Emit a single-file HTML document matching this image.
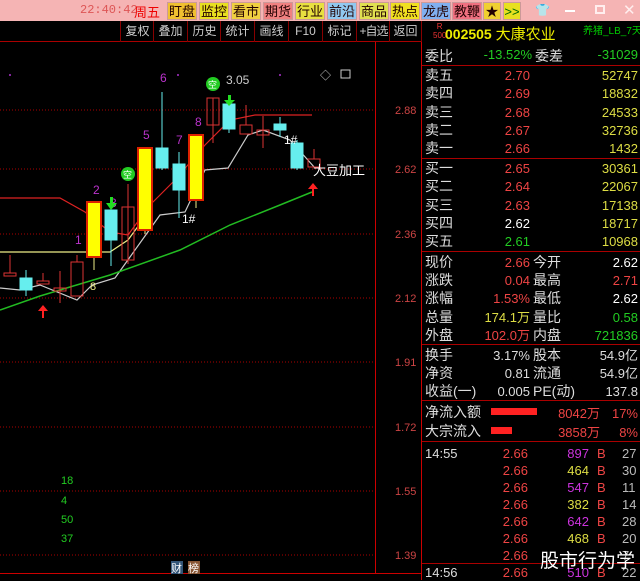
<!DOCTYPE html>
<html><head><meta charset="utf-8"><style>
*{margin:0;padding:0;box-sizing:border-box}
body{width:640px;height:580px;background:#000;overflow:hidden;position:relative;font-family:"Liberation Sans","Noto Sans CJK SC",sans-serif}
.a{position:absolute;white-space:nowrap}
#top{position:absolute;left:0;top:0;width:640px;height:21px;background:#f5b4b4}
.btn{position:absolute;top:2px;height:18px;font-size:13px;line-height:18px;text-align:center;color:#200;border:1px solid #c99}
#tb{position:absolute;left:0;top:21px;width:422px;height:21px;border-bottom:1px solid #a00}
.tb{position:absolute;top:21px;height:21px;font-size:12px;line-height:21px;color:#ccc;text-align:center;border-left:1px solid #800;white-space:nowrap;overflow:hidden}
.r{font-size:14px;color:#ddd}
.n{font-size:13px;text-align:right}
.hl{position:absolute;left:422px;width:218px;height:1px;background:#a00}
</style></head><body>
<div id="top"></div>
<div class="a" style="left:80px;top:3px;font-size:12px;color:#d55;font-family:'Liberation Mono',monospace">22:40:42</div>
<div class="a" style="left:134px;top:2px;font-size:13px;color:#e00">周五</div>
<div class="btn" style="left:167px;width:30px;background:#f0c030">盯盘</div>
<div class="btn" style="left:199px;width:30px;background:#e8e020">监控</div>
<div class="btn" style="left:231px;width:30px;background:#f0d040">看市</div>
<div class="btn" style="left:263px;width:30px;background:#f08080">期货</div>
<div class="btn" style="left:295px;width:30px;background:#e8e040">行业</div>
<div class="btn" style="left:327px;width:30px;background:#90c8f0">前沿</div>
<div class="btn" style="left:359px;width:30px;background:#e0e050">商品</div>
<div class="btn" style="left:390px;width:30px;background:#f0e020">热点</div>
<div class="btn" style="left:421px;width:30px;background:#80b0f0">龙虎</div>
<div class="btn" style="left:452px;width:30px;background:#f07080">教鞭</div>
<div class="btn" style="left:483px;width:18px;background:#f0d030">★</div>
<div class="btn" style="left:503px;width:18px;background:#e8e020;color:#060">&gt;&gt;</div>
<div class="a" style="left:535px;top:3px;font-size:12px;color:#fff">👕</div>
<div class="a" style="left:565px;top:10px;width:10px;height:2px;background:#fff"></div>
<div class="a" style="left:595px;top:5px;width:10px;height:9px;border:2px solid #fee"></div>
<div class="a" style="left:623px;top:1px;font-size:15px;color:#fee">✕</div>
<div id="tb"></div>
<div class="tb" style="left:120px;width:34px">复权</div>
<div class="tb" style="left:153px;width:34px">叠加</div>
<div class="tb" style="left:187px;width:34px">历史</div>
<div class="tb" style="left:220px;width:34px">统计</div>
<div class="tb" style="left:254px;width:34px">画线</div>
<div class="tb" style="left:288px;width:34px">F10</div>
<div class="tb" style="left:322px;width:34px">标记</div>
<div class="tb" style="left:356px;width:34px;letter-spacing:-1px">+自选</div>
<div class="tb" style="left:389px;width:33px;border-right:1px solid #800">返回</div>
<div class="a" style="left:433px;top:22px;font-size:8px;line-height:9px;color:#e33;text-align:center">R<br>500</div>
<div class="a" style="left:445px;top:23px;font-size:14px;color:#ee0;font-weight:bold">002505 <span style="font-weight:normal;font-size:15px">大康农业</span></div>
<div class="a" style="left:583px;top:22px;font-size:10px;color:#0c0">养猪_LB_7天</div>

<svg class="a" style="left:0;top:42px" width="422" height="538">
<g stroke="#a00" stroke-dasharray="1,2" stroke-width="1">
<line x1="0" y1="68" x2="375" y2="68"/><line x1="0" y1="127" x2="375" y2="127"/><line x1="0" y1="192" x2="375" y2="192"/><line x1="0" y1="256" x2="375" y2="256"/><line x1="0" y1="320" x2="375" y2="320"/><line x1="0" y1="385" x2="375" y2="385"/><line x1="0" y1="449" x2="375" y2="449"/><line x1="0" y1="513" x2="375" y2="513"/>
</g>
<line x1="375.5" y1="0" x2="375.5" y2="531" stroke="#c00"/>
<line x1="0" y1="531.5" x2="422" y2="531.5" stroke="#c00"/>
<line x1="421.5" y1="0" x2="421.5" y2="538" stroke="#c00"/>
<g fill="#c44" font-size="11">
<text x="395" y="72">2.88</text><text x="395" y="131">2.62</text><text x="395" y="196">2.36</text><text x="395" y="260">2.12</text><text x="395" y="324">1.91</text><text x="395" y="389">1.72</text><text x="395" y="453">1.55</text><text x="395" y="517">1.39</text>
</g>
<g transform="translate(0,-42)">
<polyline fill="none" stroke="#d22" stroke-width="1.2" points="0,198 60,198 85,212 110,232 128,235 150,205 175,180 205,145 230,120 255,115 312,115"/>
<polyline fill="none" stroke="#ee8" stroke-width="1.2" points="0,252 110,252 128,240 150,210"/>
<polyline fill="none" stroke="#ccc" stroke-width="1.2" points="0,288 20,290 40,285 77,300 92,285 115,278 160,215 185,212 205,170 228,168 248,135 263,130 290,140 315,168"/>
<polyline fill="none" stroke="#2b2" stroke-width="1.5" points="0,310 40,296 110,275 180,250 230,225 280,205 312,192"/>
<g stroke="#d33" fill="none">
<line x1="10" y1="255" x2="10" y2="273"/><rect x="4" y="273" width="12" height="3"/>
<line x1="43" y1="273" x2="43" y2="281"/><rect x="37" y="281" width="12" height="3"/>
<line x1="60" y1="271" x2="60" y2="303"/><rect x="54" y="288" width="12" height="3"/>
<line x1="77" y1="255" x2="77" y2="262"/><rect x="71" y="262" width="12" height="34"/>
<line x1="128" y1="184" x2="128" y2="264"/><rect x="122" y="207" width="12" height="53"/>
<line x1="213" y1="98" x2="213" y2="143"/><rect x="207" y="98" width="12" height="27"/>
<line x1="246" y1="105" x2="246" y2="125"/><rect x="240" y="125" width="12" height="9"/>
<line x1="263" y1="116" x2="263" y2="148"/><rect x="257" y="130" width="12" height="5"/>
<line x1="314" y1="149" x2="314" y2="159"/><rect x="308" y="159" width="12" height="8"/>
</g>
<g stroke="#6ee" fill="#6ee">
<line x1="26" y1="270" x2="26" y2="296"/><rect x="20" y="278" width="12" height="12"/>
<line x1="111" y1="200" x2="111" y2="266"/><rect x="105" y="210" width="12" height="30"/>
<line x1="162" y1="92" x2="162" y2="170"/><rect x="156" y="148" width="12" height="20"/>
<line x1="179" y1="152" x2="179" y2="218"/><rect x="173" y="164" width="12" height="26"/>
<line x1="229" y1="104" x2="229" y2="133"/><rect x="223" y="104" width="12" height="25"/>
<line x1="280" y1="117" x2="280" y2="137"/><rect x="274" y="124" width="12" height="6"/>
<line x1="297" y1="140" x2="297" y2="170"/><rect x="291" y="143" width="12" height="25"/>
</g>
<g fill="#ff0" stroke="#d20" stroke-width="2">
<line x1="94" y1="257" x2="94" y2="270" stroke="#ee8" stroke-width="1"/><rect x="87" y="202" width="14" height="55"/>
<line x1="145" y1="230" x2="145" y2="234" stroke="#ee8" stroke-width="1"/><rect x="138" y="148" width="14" height="82"/>
<line x1="196" y1="200" x2="196" y2="208" stroke="#ee8" stroke-width="1"/><rect x="189" y="135" width="14" height="65"/>
</g>
<g fill="#b3c" font-size="12">
<text x="75" y="244">1</text><text x="93" y="194">2</text><text x="110" y="207">3</text><text x="127" y="180">4</text><text x="143" y="139">5</text><text x="160" y="82">6</text><text x="176" y="144">7</text><text x="195" y="126">8</text>
</g>
<text x="90" y="290" fill="#ee8" font-size="11">8</text>
<g fill="#fff" font-size="12"><text x="182" y="223">1#</text><text x="284" y="144">1#</text><text x="226" y="84" fill="#ccc">3.05</text><text x="313" y="175" font-size="13">大豆加工</text></g>
<g fill="#2c2"><circle cx="128" cy="174" r="7"/><circle cx="213" cy="84" r="7"/></g>
<g fill="#fff" font-size="9"><text x="123" y="178">空</text><text x="208" y="88">空</text></g>
<g fill="#2d2"><rect x="110" y="197" width="3" height="7"/><polygon points="106,203 117,203 111,210"/><rect x="228" y="95" width="3" height="6"/><polygon points="224,100 235,100 229,106"/></g>
<g fill="#f22"><polygon points="38,311 48,311 43,305"/><rect x="42" y="310" width="2" height="8"/><polygon points="308,189 318,189 313,183"/><rect x="312" y="188" width="2" height="8"/></g>
<g fill="#a3c"><circle cx="10" cy="75" r="1"/><circle cx="178" cy="75" r="1"/><circle cx="280" cy="75" r="1"/></g>
</g>
<g fill="#2c2" font-size="11"><text x="61" y="442">18</text><text x="61" y="462">4</text><text x="61" y="481">50</text><text x="61" y="500">37</text></g>
<text x="320" y="37" fill="#ccc" font-size="11">◇</text>
<rect x="341" y="28" width="9" height="8" fill="none" stroke="#ccc"/>
<rect x="171" y="519" width="12" height="13" fill="#357"/><text x="171" y="530" fill="#fff" font-size="11">财</text>
<rect x="188" y="519" width="12" height="13" fill="#853"/><text x="188" y="530" fill="#fff" font-size="11">榜</text>
</svg>

<div class="hl" style="top:65px"></div><div class="hl" style="top:158px"></div><div class="hl" style="top:251px"></div><div class="hl" style="top:344px"></div><div class="hl" style="top:400px"></div><div class="hl" style="top:441px"></div>
<div class="a r" style="left:425px;top:46px">委比</div><div class="a n" style="left:470px;top:47px;width:62px;color:#2c2">-13.52%</div><div class="a r" style="left:535px;top:46px">委差</div><div class="a n" style="left:580px;top:47px;width:58px;color:#2c2">-31029</div>

<div class="a r" style="left:425px;top:66px;line-height:18.3px">卖五<br>卖四<br>卖三<br>卖二<br>卖一</div>
<div class="a n" style="left:490px;top:67px;width:40px;line-height:18.3px;color:#e44">2.70<br>2.69<br>2.68<br>2.67<br>2.66</div>
<div class="a n" style="left:580px;top:67px;width:58px;line-height:18.3px;color:#dd4">52747<br>18832<br>24533<br>32736<br>1432</div>
<div class="a r" style="left:425px;top:159px;line-height:18.3px">买一<br>买二<br>买三<br>买四<br>买五</div>
<div class="a n" style="left:490px;top:160px;width:40px;line-height:18.3px;color:#e44">2.65<br>2.64<br>2.63<br><span style="color:#fff">2.62</span><br><span style="color:#2c2">2.61</span></div>
<div class="a n" style="left:580px;top:160px;width:58px;line-height:18.3px;color:#dd4">30361<br>22067<br>17138<br>18717<br>10968</div>

<div class="a r" style="left:425px;top:253px;line-height:18.2px">现价<br>涨跌<br>涨幅<br>总量<br>外盘</div>
<div class="a n" style="left:470px;top:254px;width:60px;line-height:18.2px;color:#e44">2.66<br>0.04<br>1.53%<br><span style="color:#dd4">174.1万</span><br>102.0万</div>
<div class="a r" style="left:533px;top:253px;line-height:18.2px">今开<br>最高<br>最低<br>量比<br>内盘</div>
<div class="a n" style="left:580px;top:254px;width:58px;line-height:18.2px;color:#fff">2.62<br><span style="color:#e44">2.71</span><br>2.62<br><span style="color:#2c2">0.58</span><br><span style="color:#2c2">721836</span></div>

<div class="a r" style="left:425px;top:346px;line-height:18px">换手<br>净资<br>收益(一)</div>
<div class="a n" style="left:470px;top:347px;width:60px;line-height:18px;color:#ddd">3.17%<br>0.81<br>0.005</div>
<div class="a r" style="left:533px;top:346px;line-height:18px">股本<br>流通<br>PE(动)</div>
<div class="a n" style="left:580px;top:347px;width:58px;line-height:18px;color:#ddd">54.9亿<br>54.9亿<br>137.8</div>

<div class="a r" style="left:425px;top:403px;line-height:19px">净流入额<br>大宗流入</div>
<div class="a" style="left:491px;top:408px;width:46px;height:7px;background:#f22"></div>
<div class="a" style="left:491px;top:427px;width:21px;height:7px;background:#f22"></div>
<div class="a n" style="left:550px;top:404px;width:50px;line-height:19px;color:#e44">8042万<br>3858万</div>
<div class="a n" style="left:600px;top:404px;width:38px;line-height:19px;color:#e44">17%<br>8%</div>

<div class="a" style="left:425px;top:445px;font-size:13px;line-height:17px;color:#ddd">14:55</div>
<div class="a" style="left:425px;top:564px;font-size:13px;line-height:17px;color:#ddd">14:56</div>
<div class="hl" style="top:563px"></div>
<div class="a n" style="left:490px;top:445px;width:38px;line-height:17px;color:#e44">2.66<br>2.66<br>2.66<br>2.66<br>2.66<br>2.66<br>2.66<br>2.66</div>
<div class="a n" style="left:555px;top:445px;width:34px;line-height:17px;color:#c3d">897<br><span style="color:#dd4">464</span><br>547<br><span style="color:#dd4">382</span><br>642<br><span style="color:#dd4">468</span><br><br>510</div>
<div class="a" style="left:597px;top:445px;font-size:13px;line-height:17px;color:#e44">B<br>B<br>B<br>B<br>B<br>B<br><br>B</div>
<div class="a" style="left:622px;top:445px;font-size:13px;line-height:17px;color:#bbb">27<br>30<br>11<br>14<br>28<br>20<br>7<br>22</div>
<div class="a" style="left:540px;top:546px;font-size:19px;color:#fff">股市行为学</div>
</body></html>
